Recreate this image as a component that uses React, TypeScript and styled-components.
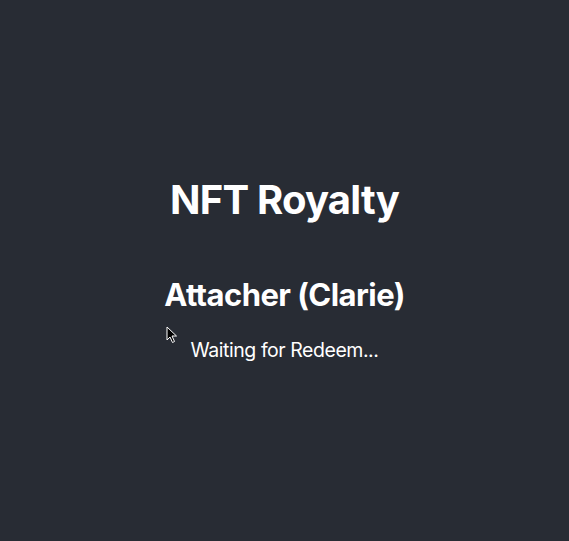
import React from "react";
import styled, { createGlobalStyle } from "styled-components";

const Global = createGlobalStyle`
  html, body { margin: 0; padding: 0; background: #282c34; }
  body { font-family: Inter, "Noto Sans", sans-serif; color: #ffffff; }
`;

const Page = styled.div`
  position: relative;
  box-sizing: border-box;
  min-height: 100vh;
  padding-bottom: 3px;
  display: flex;
  flex-direction: column;
  align-items: center;
  justify-content: center;
  background: #282c34;
`;

const Title = styled.h1`
  margin: 0 0 52px;
  font-size: 40px;
  font-weight: 700;
  line-height: 1.2;
  letter-spacing: -0.8px;
`;

const Subtitle = styled.h2`
  margin: 0 0 26px;
  font-size: 31px;
  font-weight: 700;
  line-height: 1.2;
  letter-spacing: -0.55px;
`;

const Status = styled.p`
  margin: 0;
  font-size: 19.5px;
  font-weight: 400;
  line-height: 1.2;
  letter-spacing: -0.45px;
`;

const Cursor = styled.svg`
  position: absolute;
  left: 166px;
  top: 326px;
`;

export default function App() {
  return (
    <>
      <Global />
      <Page>
        <Title>NFT Royalty</Title>
        <Subtitle>Attacher (Clarie)</Subtitle>
        <Status>Waiting for Redeem...</Status>
        <Cursor width="12" height="18" viewBox="0 0 12 18">
          <path d="M1 1 L1 14 L4 11 L6.5 16.5 L8.5 15.5 L6 10 L10.5 10 Z" fill="#000" stroke="#fff" strokeWidth="1" strokeLinejoin="round" />
        </Cursor>
      </Page>
    </>
  );
}
